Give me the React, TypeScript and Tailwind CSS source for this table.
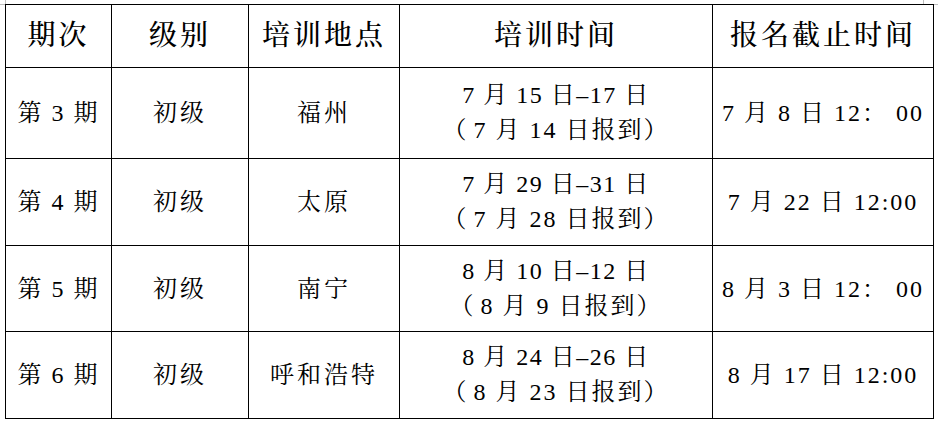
import React from "react";

const font = {
  fontFamily:
    '"Liberation Serif", "Noto Serif CJK SC", "Noto Sans CJK SC", serif',
};

const headers = ["期次", "级别", "培训地点", "培训时间", "报名截止时间"];

const rows = [
  ["第 3 期", "初级", "福州", ["7 月 15 日–17 日", "7 月 14 日报到"], "7 月 8 日 12： 00"],
  ["第 4 期", "初级", "太原", ["7 月 29 日–31 日", "7 月 28 日报到"], "7 月 22 日 12:00"],
  ["第 5 期", "初级", "南宁", ["8 月 10 日–12 日", "8 月 9 日报到"], "8 月 3 日 12： 00"],
  ["第 6 期", "初级", "呼和浩特", ["8 月 24 日–26 日", "8 月 23 日报到"], "8 月 17 日 12:00"],
] as const;

export default function App() {
  return (
    <div className="relative w-[938px] h-[428px] bg-white overflow-hidden" style={font}>
      {/* page corner marks */}
      <div className="absolute left-0 top-[4px] w-[5px] h-px bg-[#bdbdbd]" />
      <div className="absolute left-[5px] top-0 w-px h-[4px] bg-[#bdbdbd]" />
      <div className="absolute left-[923px] top-0 w-px h-[4px] bg-[#bdbdbd]" />
      <div className="absolute left-[934px] top-[4px] w-[4px] h-px bg-[#bdbdbd]" />

      <div className="pt-[4px] pl-[5px]">
        <div className="inline-grid grid-cols-[105px_136px_150px_312px_220px] grid-rows-[62px_90px_86px_85px_86px] gap-px p-px bg-black text-black">
          {headers.map((h) => (
            <div
              key={h}
              className="bg-white flex items-center justify-center text-[28px] font-medium tracking-[3px] leading-none"
            >
              {h}
            </div>
          ))}
          {rows.map((r, i) => (
            <React.Fragment key={i}>
              <div className="bg-white flex items-center justify-center text-[24px] tracking-[2px] leading-none">
                {r[0]}
              </div>
              <div className="bg-white flex items-center justify-center text-[24px] tracking-[3px] leading-none">
                {r[1]}
              </div>
              <div className="bg-white flex items-center justify-center text-[24px] tracking-[3px] leading-none">
                {r[2]}
              </div>
              <div className="bg-white flex flex-col items-center justify-center text-[24px] leading-[35px]">
                <div className="tracking-[1.5px]">{r[3][0]}</div>
                <div className="tracking-[2px]">
                  <span className="mr-[5px]">（</span>
                  {r[3][1]}）
                </div>
              </div>
              <div className="bg-white flex items-center justify-center text-[24px] tracking-[2px] leading-none">
                {r[4]}
              </div>
            </React.Fragment>
          ))}
        </div>
      </div>
    </div>
  );
}
